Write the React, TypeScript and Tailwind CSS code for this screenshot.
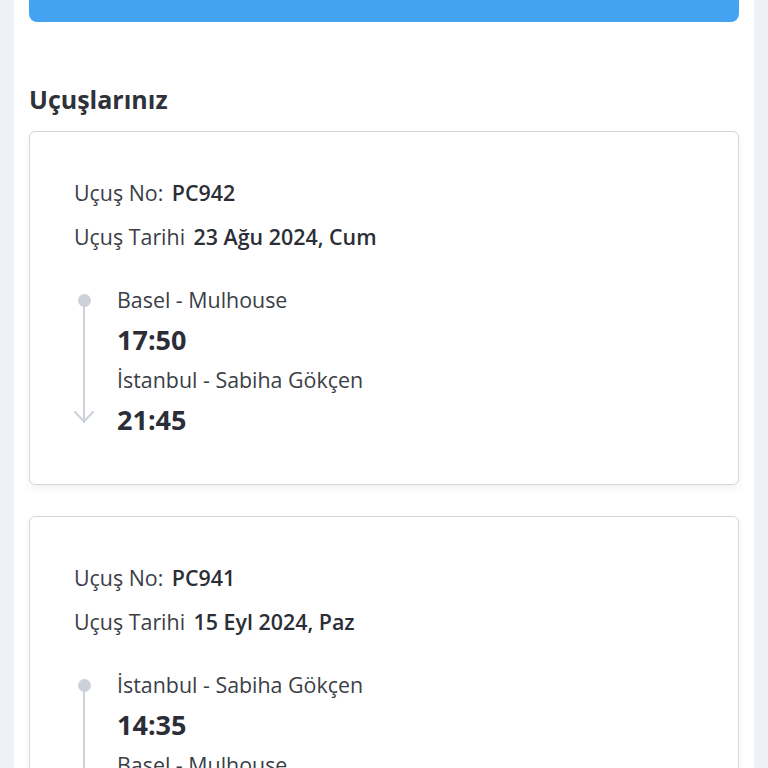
import React from "react";

type Flight = {
  no: string;
  date: string;
  from: string;
  dep: string;
  to: string;
  arr: string;
};

const flights: Flight[] = [
  {
    no: "PC942",
    date: "23 Ağu 2024, Cum",
    from: "Basel - Mulhouse",
    dep: "17:50",
    to: "İstanbul - Sabiha Gökçen",
    arr: "21:45",
  },
  {
    no: "PC941",
    date: "15 Eyl 2024, Paz",
    from: "İstanbul - Sabiha Gökçen",
    dep: "14:35",
    to: "Basel - Mulhouse",
    arr: "18:30",
  },
];

function Timeline() {
  return (
    <div className="relative w-[26px] shrink-0 flex flex-col items-center pt-[14px]">
      <div className="w-[13px] h-[13px] rounded-full bg-[#cdd1db] shrink-0" />
      <div className="w-[2px] grow bg-[#cdd1db] -mt-[2px]" />
      <svg width="22" height="14" viewBox="0 0 22 14" className="-mt-[13px] mb-[16px] shrink-0">
        <path d="M2 2 L11 11.5 L20 2" fill="none" stroke="#cdd1db" strokeWidth="2" strokeLinecap="round" />
      </svg>
    </div>
  );
}

function FlightCard({ f }: { f: Flight }) {
  return (
    <div className="bg-white border border-[#d3d6dc] rounded-md shadow-[0_3px_8px_rgba(0,0,0,0.06)] p-11">
      <div className="flex flex-col gap-[10px] text-[21.4px] leading-[34px] text-[#3b3e46]">
        <div>
          Uçuş No: <span className="ml-[3px] font-semibold text-[#2b2e36]">{f.no}</span>
        </div>
        <div>
          Uçuş Tarihi <span className="ml-[3px] font-semibold text-[#2b2e36]">{f.date}</span>
        </div>
      </div>
      <div className="flex mt-[26px] -ml-[3px] gap-[20px]">
        <Timeline />
        <div className="flex flex-col text-[#3b3e46]">
          <div className="text-[21.4px] leading-[40px]">{f.from}</div>
          <div className="text-[27px] leading-[40px] font-bold text-[#2b2e36]">{f.dep}</div>
          <div className="text-[21.4px] leading-[40px]">{f.to}</div>
          <div className="text-[27px] leading-[40px] font-bold text-[#2b2e36]">{f.arr}</div>
        </div>
      </div>
    </div>
  );
}

export default function App() {
  return (
    <div className="min-h-screen bg-[#eef1f5] px-[14px] font-['Open_Sans',sans-serif]">
      <div className="bg-white min-h-screen px-[15px] pb-10">
        <div className="h-[22px] bg-[#44a3f1] rounded-b-lg" />
        <h2 className="mt-[61px] mb-4 text-[25px] leading-[32px] font-bold text-[#2f323a]">
          Uçuşlarınız
        </h2>
        <div className="flex flex-col gap-[31px]">
          {flights.map((f) => (
            <FlightCard key={f.no} f={f} />
          ))}
        </div>
      </div>
    </div>
  );
}
